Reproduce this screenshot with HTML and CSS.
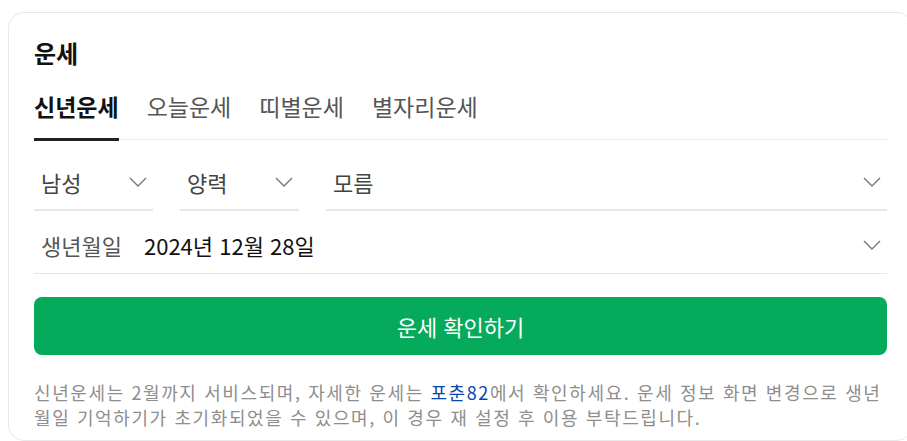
FILE: index.html
```html
<!DOCTYPE html>
<html lang="ko">
<head>
<meta charset="utf-8">
<link rel="stylesheet" href="styles.css">
</head>
<body>
<section class="card">
  <h2 class="title">운세</h2>
  <ul class="tabs">
    <li class="tab active">신년운세</li>
    <li class="tab">오늘운세</li>
    <li class="tab">띠별운세</li>
    <li class="tab">별자리운세</li>
  </ul>
  <div class="selects">
    <div class="select sel-sm"><span>남성</span><svg class="chev" width="18" height="10" viewBox="0 0 18 10"><path d="M1 1 L9 9 L17 1" fill="none" stroke="#777" stroke-width="1.4"/></svg></div>
    <div class="select sel-sm"><span>양력</span><svg class="chev" width="18" height="10" viewBox="0 0 18 10"><path d="M1 1 L9 9 L17 1" fill="none" stroke="#777" stroke-width="1.4"/></svg></div>
    <div class="select sel-lg"><span>모름</span><svg class="chev" width="18" height="10" viewBox="0 0 18 10"><path d="M1 1 L9 9 L17 1" fill="none" stroke="#777" stroke-width="1.4"/></svg></div>
  </div>
  <div class="birth">
    <span class="birth-label">생년월일</span>
    <span class="birth-value">2024년 12월 28일</span>
    <svg class="chev" width="18" height="10" viewBox="0 0 18 10"><path d="M1 1 L9 9 L17 1" fill="none" stroke="#777" stroke-width="1.4"/></svg>
  </div>
  <button class="btn">운세 확인하기</button>
  <p class="note">신년운세는 2월까지 서비스되며, 자세한 운세는 <a class="link">포춘82</a>에서 확인하세요. 운세 정보 화면 변경으로 생년월일 기억하기가 초기화되었을 수 있으며, 이 경우 재 설정 후 이용 부탁드립니다.</p>
</section>
</body>
</html>
```

FILE: styles.css
```css
html, body {
  margin: 0;
  padding: 0;
  overflow: hidden;
  background: #fff;
}
body {
  font-family: "Noto Sans CJK KR", "Noto Sans", sans-serif;
  width: 907px;
  height: 441px;
}
.card {
  box-sizing: border-box;
  width: 905px;
  margin: 12px 0 0 8px;
  padding: 24px 25px 10px;
  border: 1px solid #e8e8e8;
  border-radius: 16px;
}
.title {
  margin: 0;
  font-size: 24px;
  font-weight: 700;
  line-height: 32px;
  color: #111;
}
.tabs {
  display: flex;
  gap: 28px;
  list-style: none;
  margin: 21px 0 0;
  padding: 0;
  border-bottom: 1px solid #ebebeb;
}
.tab {
  position: relative;
  font-size: 23px;
  line-height: 32px;
  padding-bottom: 17px;
  color: #555;
}
.tab.active {
  color: #111;
  font-weight: 700;
}
.tab.active::after {
  content: "";
  position: absolute;
  left: 0;
  right: 0;
  bottom: -2px;
  height: 3px;
  background: #222;
}
.selects {
  display: flex;
  gap: 27px;
  margin-top: 15px;
}
.select {
  box-sizing: border-box;
  height: 56px;
  display: flex;
  align-items: center;
  justify-content: space-between;
  padding: 0 6px 0 7px;
  border-bottom: 2px solid #e6e6e6;
  font-size: 22px;
  color: #444;
}
.sel-sm { width: 119px; }
.sel-lg { flex: 1; }
.chev { display: block; }
.birth {
  box-sizing: border-box;
  height: 63px;
  display: flex;
  align-items: center;
  padding: 6px 6px 0 7px;
  border-bottom: 1px solid #e6e6e6;
  font-size: 22px;
}
.birth-label {
  color: #555;
  margin-right: 22px;
}
.birth-value {
  color: #111;
  flex: 1;
}
.btn {
  display: block;
  width: 100%;
  height: 58px;
  margin-top: 23px;
  border: 0;
  border-radius: 8px;
  background: #05aa5a;
  color: #fff;
  font-family: inherit;
  font-size: 22px;
}
.note {
  margin: 25px 0 0;
  font-size: 18px;
  line-height: 25px;
  letter-spacing: 1.6px;
  color: #8e8e8e;
}
.link {
  color: #0a45b4;
}
```
